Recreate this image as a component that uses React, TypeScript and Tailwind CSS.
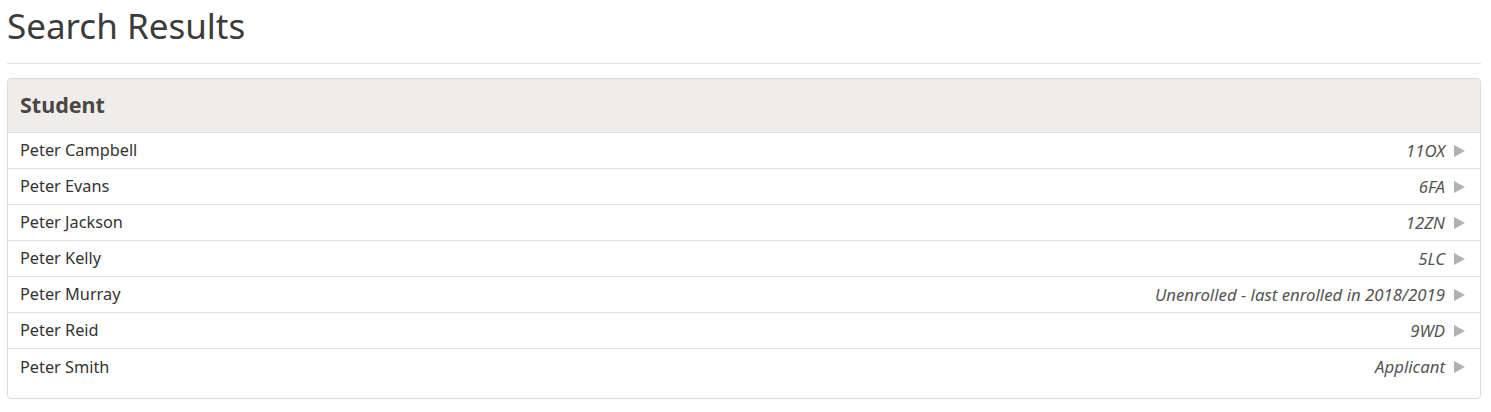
import React from 'react';

type Result = { name: string; detail: string };

const results: Result[] = [
  { name: 'Peter Campbell', detail: '11OX' },
  { name: 'Peter Evans', detail: '6FA' },
  { name: 'Peter Jackson', detail: '12ZN' },
  { name: 'Peter Kelly', detail: '5LC' },
  { name: 'Peter Murray', detail: 'Unenrolled - last enrolled in 2018/2019' },
  { name: 'Peter Reid', detail: '9WD' },
  { name: 'Peter Smith', detail: 'Applicant' },
];

const Caret: React.FC = () => (
  <svg width="11" height="12" viewBox="0 0 11 12" className="ml-[9px] shrink-0">
    <path d="M0 0 L11 6 L0 12 Z" fill="#b3b1af" />
  </svg>
);

const App: React.FC = () => {
  return (
    <div className="px-[7px] pt-[3px] text-[#333] font-['Noto_Sans',sans-serif] bg-white min-h-screen">
      <h1 className="text-[35px] leading-[46px] text-[#3b3b3b] font-normal">Search Results</h1>
      <hr className="mt-[14px] mr-[3px] border-t border-[#e3e3e3]" />

      <div className="mt-[14px] mr-[3px] border border-[#dcdad8] rounded-[4px] pb-[13px]">
        <div className="h-[54px] px-[12px] flex items-center bg-[#eeedeb] border-b border-[#dcdad8] rounded-t-[4px]">
          <span className="text-[21.5px] font-bold text-[#4a4644]">Student</span>
        </div>
        {results.map((r, i) => (
          <div
            key={r.name}
            className={`h-[36px] pl-[12px] pr-[15px] flex items-center justify-between ${
              i < results.length - 1 ? 'border-b border-[#e2e0de]' : ''
            }`}
          >
            <span className="text-[16.3px] text-[#333]">{r.name}</span>
            <span className="flex items-center">
              <span className="text-[16.8px] italic text-[#555]">{r.detail}</span>
              <Caret />
            </span>
          </div>
        ))}
      </div>
    </div>
  );
};

export default App;
